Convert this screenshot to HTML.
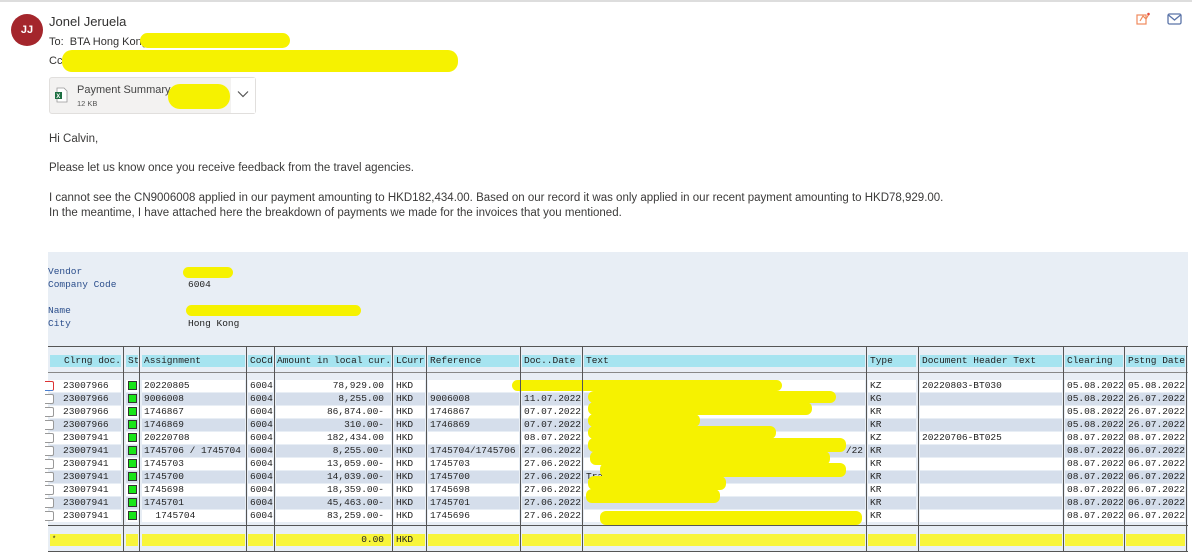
<!DOCTYPE html>
<html><head><meta charset="utf-8"><style>
*{margin:0;padding:0;box-sizing:border-box}
body{width:1192px;height:552px;overflow:hidden;background:#fff;position:relative;font-family:"Liberation Sans",sans-serif;color:#323130}
.a{position:absolute;white-space:nowrap}
.y{position:absolute;background:#f6f200;border-radius:6px}
.panel{position:absolute;left:48px;top:252px;width:1140px;height:300px;background:#e8eef5}
.m{font-family:"Liberation Mono",monospace;font-size:9.5px;color:#222}
.row{position:absolute;left:0;width:1192px;height:12px}
.c{position:absolute;top:0;height:12px;line-height:12px;padding-left:2px;font-family:"Liberation Mono",monospace;font-size:9.5px;color:#222;overflow:hidden;white-space:nowrap}
.w .c{background:#fff}.b .c{background:#d5deeb}
.h .c{background:#a6e4f0;height:12px}
.t .c{background:#f8f53a}
.c0{left:50px;width:71px;padding-left:13px}
.c1{left:126px;width:12px}
.c2{left:142px;width:103px}
.c3{left:248px;width:25px}
.c4{left:276px;width:115px;text-align:right;padding-right:7px}
.c5{left:394px;width:31px}
.c6{left:428px;width:91px}
.c7{left:522px;width:59px}
.c8{left:584px;width:281px}
.c9{left:868px;width:48px}
.c10{left:920px;width:142px}
.c11{left:1065px;width:58px}
.c12{left:1126px;width:59px}
.g{display:inline-block;width:9px;height:9px;background:#19e619;border:1px solid #333;margin-top:1px;margin-left:0px}
.vl{position:absolute;top:346px;height:206px;width:1px;background:#555}
.hl{position:absolute;left:48px;width:1140px;height:1px;background:#555}
.cb{position:absolute;left:45px;width:9px;height:10px;border:1px solid #999;border-left:none;background:#fff;border-radius:0 2px 2px 0}
.e{position:absolute;white-space:nowrap;left:49px;font-size:11.5px;color:#3b3a39}
</style></head><body>
<div style="position:absolute;left:0;top:0;width:1192px;height:2px;background:#ddd"></div>
<div style="position:absolute;left:11px;top:14px;width:32px;height:32px;border-radius:50%;background:#a4262c;color:#fff;font-size:11px;font-weight:bold;text-align:center;line-height:32px">JJ</div>
<div class="a" style="left:49px;top:14px;font-size:13px;color:#323130">Jonel Jeruela</div>
<div class="a" style="left:49px;top:36px;font-size:11px">To:&nbsp; BTA Hong Kong</div>
<div class="a" style="left:49px;top:55px;font-size:11px">Cc:</div>
<div class="y" style="left:140px;top:33px;width:150px;height:15px;border-radius:8px"></div>
<div class="y" style="left:62px;top:50px;width:396px;height:22px;border-radius:10px"></div>
<svg class="a" style="left:1135px;top:11px" width="16" height="16" viewBox="0 0 16 16"><rect x="2" y="4" width="9" height="9" fill="none" stroke="#f08a5d" stroke-width="1.2"/><path d="M5 10l3-5 3 3 3-5" fill="none" stroke="#f08a5d" stroke-width="1.2"/><circle cx="13.5" cy="3" r="1.3" fill="#e74c3c"/></svg>
<svg class="a" style="left:1167px;top:12px" width="16" height="14" viewBox="0 0 16 14"><rect x="1" y="2" width="13" height="10" rx="1.5" fill="none" stroke="#5a74a8" stroke-width="1.3"/><path d="M1.5 3l6 5 6-5" fill="none" stroke="#5a74a8" stroke-width="1.3"/></svg>
<div style="position:absolute;left:49px;top:77px;width:207px;height:37px;background:#f3f2f1;border:1px solid #e1dfdd;border-radius:3px"></div>
<div style="position:absolute;left:231px;top:78px;width:24px;height:35px;background:#fff"></div>
<svg class="a" style="left:54px;top:87px" width="14" height="16" viewBox="0 0 14 16"><path d="M3 1h7l3 3v11H3z" fill="#fff" stroke="#999" stroke-width="0.8"/><rect x="1" y="5" width="7" height="7" fill="#1d6f42"/><text x="2.3" y="11" font-size="6" fill="#fff" font-family="Liberation Sans" font-weight="bold">X</text></svg>
<div class="a" style="left:77px;top:84px;font-size:11px;color:#444">Payment Summary</div>
<div class="a" style="left:77px;top:99px;font-size:7.5px;color:#555">12 KB</div>
<div class="y" style="left:168px;top:84px;width:62px;height:25px;border-radius:12px"></div>
<svg class="a" style="left:237px;top:90px" width="12" height="8" viewBox="0 0 12 8"><path d="M1 1.5l5 5 5-5" fill="none" stroke="#555" stroke-width="1.2"/></svg>
<div class="e" style="top:133px">Hi Calvin,</div>
<div class="e" style="top:162px">Please let us know once you receive feedback from the travel agencies.</div>
<div class="e" style="top:192px">I cannot see the CN9006008 applied in our payment amounting to HKD182,434.00. Based on our record it was only applied in our recent payment amounting to HKD78,929.00.</div>
<div class="e" style="top:207px">In the meantime, I have attached here the breakdown of payments we made for the invoices that you mentioned.</div>

<div class="panel"></div>
<div class="a m" style="left:48px;top:266px;color:#2c4f8c">Vendor</div>
<div class="a m" style="left:48px;top:279px;color:#2c4f8c">Company Code</div>
<div class="a m" style="left:188px;top:279px">6004</div>
<div class="a m" style="left:48px;top:305px;color:#2c4f8c">Name</div>
<div class="a m" style="left:48px;top:318px;color:#2c4f8c">City</div>
<div class="a m" style="left:188px;top:318px">Hong Kong</div>
<div class="y" style="left:183px;top:267px;width:50px;height:11px"></div>
<div class="y" style="left:186px;top:305px;width:175px;height:11px"></div>

<div class="row h" style="top:355px">
<div class="c c0" style="padding-left:14px">Clrng doc.</div><div class="c c1">St</div><div class="c c2">Assignment</div><div class="c c3">CoCd</div><div class="c c4" style="text-align:left;padding-left:1px">Amount in local cur.</div><div class="c c5">LCurr</div><div class="c c6">Reference</div><div class="c c7">Doc..Date</div><div class="c c8">Text</div><div class="c c9">Type</div><div class="c c10">Document Header Text</div><div class="c c11">Clearing</div><div class="c c12">Pstng Date</div></div>

<div class="row w" style="top:380px"><div class="c c0">23007966</div><div class="c c1"><span class="g"></span></div><div class="c c2">20220805</div><div class="c c3">6004</div><div class="c c4">78,929.00</div><div class="c c5">HKD</div><div class="c c6"></div><div class="c c7"></div><div class="c c8"></div><div class="c c9">KZ</div><div class="c c10">20220803-BT030</div><div class="c c11">05.08.2022</div><div class="c c12">05.08.2022</div></div>
<div class="row b" style="top:393px"><div class="c c0">23007966</div><div class="c c1"><span class="g"></span></div><div class="c c2">9006008</div><div class="c c3">6004</div><div class="c c4">8,255.00</div><div class="c c5">HKD</div><div class="c c6">9006008</div><div class="c c7">11.07.2022</div><div class="c c8"></div><div class="c c9">KG</div><div class="c c10"></div><div class="c c11">05.08.2022</div><div class="c c12">26.07.2022</div></div>
<div class="row w" style="top:406px"><div class="c c0">23007966</div><div class="c c1"><span class="g"></span></div><div class="c c2">1746867</div><div class="c c3">6004</div><div class="c c4">86,874.00-</div><div class="c c5">HKD</div><div class="c c6">1746867</div><div class="c c7">07.07.2022</div><div class="c c8"></div><div class="c c9">KR</div><div class="c c10"></div><div class="c c11">05.08.2022</div><div class="c c12">26.07.2022</div></div>
<div class="row b" style="top:419px"><div class="c c0">23007966</div><div class="c c1"><span class="g"></span></div><div class="c c2">1746869</div><div class="c c3">6004</div><div class="c c4">310.00-</div><div class="c c5">HKD</div><div class="c c6">1746869</div><div class="c c7">07.07.2022</div><div class="c c8"></div><div class="c c9">KR</div><div class="c c10"></div><div class="c c11">05.08.2022</div><div class="c c12">26.07.2022</div></div>
<div class="row w" style="top:432px"><div class="c c0">23007941</div><div class="c c1"><span class="g"></span></div><div class="c c2">20220708</div><div class="c c3">6004</div><div class="c c4">182,434.00</div><div class="c c5">HKD</div><div class="c c6"></div><div class="c c7">08.07.2022</div><div class="c c8"></div><div class="c c9">KZ</div><div class="c c10">20220706-BT025</div><div class="c c11">08.07.2022</div><div class="c c12">08.07.2022</div></div>
<div class="row b" style="top:445px"><div class="c c0">23007941</div><div class="c c1"><span class="g"></span></div><div class="c c2">1745706 / 1745704</div><div class="c c3">6004</div><div class="c c4">8,255.00-</div><div class="c c5">HKD</div><div class="c c6">1745704/1745706</div><div class="c c7">27.06.2022</div><div class="c c8" style="text-align:right;padding-right:2px">/22</div><div class="c c9">KR</div><div class="c c10"></div><div class="c c11">08.07.2022</div><div class="c c12">06.07.2022</div></div>
<div class="row w" style="top:458px"><div class="c c0">23007941</div><div class="c c1"><span class="g"></span></div><div class="c c2">1745703</div><div class="c c3">6004</div><div class="c c4">13,059.00-</div><div class="c c5">HKD</div><div class="c c6">1745703</div><div class="c c7">27.06.2022</div><div class="c c8"></div><div class="c c9">KR</div><div class="c c10"></div><div class="c c11">08.07.2022</div><div class="c c12">06.07.2022</div></div>
<div class="row b" style="top:471px"><div class="c c0">23007941</div><div class="c c1"><span class="g"></span></div><div class="c c2">1745700</div><div class="c c3">6004</div><div class="c c4">14,039.00-</div><div class="c c5">HKD</div><div class="c c6">1745700</div><div class="c c7">27.06.2022</div><div class="c c8">Tra</div><div class="c c9">KR</div><div class="c c10"></div><div class="c c11">08.07.2022</div><div class="c c12">06.07.2022</div></div>
<div class="row w" style="top:484px"><div class="c c0">23007941</div><div class="c c1"><span class="g"></span></div><div class="c c2">1745698</div><div class="c c3">6004</div><div class="c c4">18,359.00-</div><div class="c c5">HKD</div><div class="c c6">1745698</div><div class="c c7">27.06.2022</div><div class="c c8"></div><div class="c c9">KR</div><div class="c c10"></div><div class="c c11">08.07.2022</div><div class="c c12">06.07.2022</div></div>
<div class="row b" style="top:497px"><div class="c c0">23007941</div><div class="c c1"><span class="g"></span></div><div class="c c2">1745701</div><div class="c c3">6004</div><div class="c c4">45,463.00-</div><div class="c c5">HKD</div><div class="c c6">1745701</div><div class="c c7">27.06.2022</div><div class="c c8"></div><div class="c c9">KR</div><div class="c c10"></div><div class="c c11">08.07.2022</div><div class="c c12">06.07.2022</div></div>
<div class="row w" style="top:510px"><div class="c c0">23007941</div><div class="c c1"><span class="g"></span></div><div class="c c2">&nbsp; 1745704</div><div class="c c3">6004</div><div class="c c4">83,259.00-</div><div class="c c5">HKD</div><div class="c c6">1745696</div><div class="c c7">27.06.2022</div><div class="c c8"></div><div class="c c9">KR</div><div class="c c10"></div><div class="c c11">08.07.2022</div><div class="c c12">06.07.2022</div></div>

<div class="row t" style="top:534px"><div class="c c0" style="padding-left:2px;font-size:7px">*</div><div class="c c1"></div><div class="c c2"></div><div class="c c3"></div><div class="c c4">0.00</div><div class="c c5">HKD</div><div class="c c6"></div><div class="c c7"></div><div class="c c8"></div><div class="c c9"></div><div class="c c10"></div><div class="c c11"></div><div class="c c12"></div></div>

<div class="cb" style="top:381px;border-color:#d33 #d33 #4a7fd0 #d33"></div>
<div class="cb" style="top:394px"></div><div class="cb" style="top:407px"></div><div class="cb" style="top:420px"></div><div class="cb" style="top:433px"></div><div class="cb" style="top:446px"></div><div class="cb" style="top:459px"></div><div class="cb" style="top:472px"></div><div class="cb" style="top:485px"></div><div class="cb" style="top:498px"></div><div class="cb" style="top:511px"></div>

<div class="y" style="left:512px;top:380px;width:270px;height:11px"></div>
<div class="y" style="left:588px;top:391px;width:248px;height:12px"></div>
<div class="y" style="left:588px;top:402px;width:224px;height:13px"></div>
<div class="y" style="left:588px;top:414px;width:112px;height:13px"></div>
<div class="y" style="left:588px;top:426px;width:188px;height:13px"></div>
<div class="y" style="left:588px;top:438px;width:258px;height:14px"></div>
<div class="y" style="left:590px;top:451px;width:240px;height:14px"></div>
<div class="y" style="left:600px;top:463px;width:246px;height:14px"></div>
<div class="y" style="left:588px;top:476px;width:138px;height:14px"></div>
<div class="y" style="left:586px;top:489px;width:134px;height:14px"></div>
<div class="y" style="left:600px;top:511px;width:262px;height:14px"></div>

<div class="hl" style="top:346px"></div><div class="hl" style="top:372px;background:#888"></div><div class="hl" style="top:525px"></div><div class="hl" style="top:551px"></div>
<div class="vl" style="left:123px"></div><div class="vl" style="left:139px"></div><div class="vl" style="left:246px"></div><div class="vl" style="left:274px"></div><div class="vl" style="left:392px"></div><div class="vl" style="left:426px"></div><div class="vl" style="left:520px"></div><div class="vl" style="left:582px"></div><div class="vl" style="left:866px"></div><div class="vl" style="left:918px"></div><div class="vl" style="left:1063px"></div><div class="vl" style="left:1124px"></div><div class="vl" style="left:1186px"></div>
</body></html>
